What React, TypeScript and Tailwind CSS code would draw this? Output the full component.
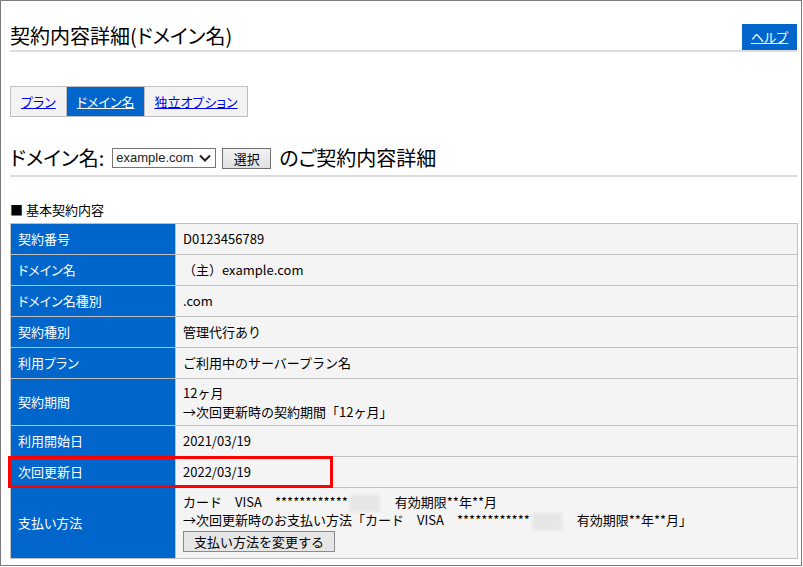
import React from "react"

const rows: { label: string; value: React.ReactNode; tall?: boolean }[] = [
  { label: "契約番号", value: "D0123456789" },
  { label: "ドメイン名", value: "（主）example.com" },
  { label: "ドメイン名種別", value: ".com" },
  { label: "契約種別", value: "管理代行あり" },
  { label: "利用プラン", value: "ご利用中のサーバープラン名" },
  {
    label: "契約期間",
    tall: true,
    value: (
      <div className="leading-[19px]">
        <div>12ヶ月</div>
        <div>→次回更新時の契約期間「12ヶ月」</div>
      </div>
    ),
  },
  { label: "利用開始日", value: "2021/03/19" },
  { label: "次回更新日", value: "2022/03/19" },
]

// blurred-out card digits
function Masked() {
  return <span className="inline-block w-[30px] h-[17px] align-middle bg-[#e6e6e6] blur-[1.5px] mx-[2px]" />
}

export default function App() {
  return (
    <div className="w-[802px] h-[566px] border border-[#7a7a7a] bg-white pt-[23px] pl-[9px] pr-[4px] text-black font-['Noto_Sans_CJK_JP',sans-serif] overflow-hidden">
      {/* title */}
      <div className="flex items-end justify-between border-b-2 border-[#dcdcdc]">
        <h1 className="text-[20px] leading-[24px] pb-[2px] [font-feature-settings:'palt']">契約内容詳細(ドメイン名)</h1>
        <a href="#" className="w-[55px] h-[26px] bg-[#0066cc] text-white text-[13px] underline flex items-center justify-center [font-feature-settings:'palt']">
          ヘルプ
        </a>
      </div>

      {/* tabs */}
      <div className="mt-[34px] flex w-fit border border-[#c0c0c0] bg-[#f3f3f3] text-[13px] h-[31px] [font-feature-settings:'palt']">
        <a href="#" className="px-[10px] flex items-center text-[#0000ee] underline">プラン</a>
        <a href="#" className="px-[10px] flex items-center bg-[#0066cc] text-white underline border-x border-[#c0c0c0]">ドメイン名</a>
        <a href="#" className="px-[9px] flex items-center text-[#0000ee] underline">独立オプション</a>
      </div>

      {/* domain heading */}
      <div className="mt-[28px] flex items-center border-b-2 border-[#dcdcdc] pb-[4px] h-[32px] [font-feature-settings:'palt']">
        <span className="text-[20px] leading-[24px]">ドメイン名:</span>
        <div className="ml-[8px] w-[104px] h-[20px] border border-[#767676] bg-white flex items-center justify-between pl-[3px] pr-[4px] font-['Liberation_Sans',sans-serif] text-[13px] text-[#222]">
          <span>example.com</span>
          <svg width="12" height="8" viewBox="0 0 12 8">
            <polyline points="1,1.5 6,6.5 11,1.5" fill="none" stroke="#222" strokeWidth="2" />
          </svg>
        </div>
        <button className="ml-[6px] w-[49px] h-[21px] border border-[#707070] bg-gradient-to-b from-[#f2f2f2] to-[#e0e0e0] text-[13px] leading-none">
          選択
        </button>
        <span className="ml-[8px] text-[20px] leading-[24px]">のご契約内容詳細</span>
      </div>

      {/* basic contract */}
      <div className="mt-[25px] text-[13px] leading-[16px]">■ 基本契約内容</div>
      <div className="relative mt-[5px] w-[788px]">
        <table className="w-full border-collapse text-[13px] leading-[16px]">
          <tbody>
            {rows.map((r) => (
              <tr key={r.label} className={r.tall ? "h-[47px]" : "h-[31px]"}>
                <td className="w-[165px] border border-[#c0c0c0] bg-[#0066cc] text-white pl-[7px] py-0 [font-feature-settings:'palt']">{r.label}</td>
                <td className="border border-[#c0c0c0] bg-[#f4f4f4] pl-[7px] py-0">{r.value}</td>
              </tr>
            ))}
            <tr className="h-[69px]">
              <td className="w-[165px] border border-[#c0c0c0] bg-[#0066cc] text-white pl-[7px] py-0 [font-feature-settings:'palt']">支払い方法</td>
              <td className="border border-[#c0c0c0] bg-[#f4f4f4] pl-[7px] py-[6px]">
                <div>
                  カード　VISA　************<Masked />　有効期限**年**月
                </div>
                <div>
                  →次回更新時のお支払い方法「カード　VISA　************<Masked />　有効期限**年**月」
                </div>
                <button className="mt-[1px] h-[21px] px-[10px] border border-[#8a8a8a] bg-[#e6e6e6] text-[13px] leading-none">
                  支払い方法を変更する
                </button>
              </td>
            </tr>
          </tbody>
        </table>
        <div className="absolute left-[-2px] top-[233px] w-[325px] h-[32px] border-[3px] border-[#ff0000] pointer-events-none" />
      </div>
    </div>
  )
}
